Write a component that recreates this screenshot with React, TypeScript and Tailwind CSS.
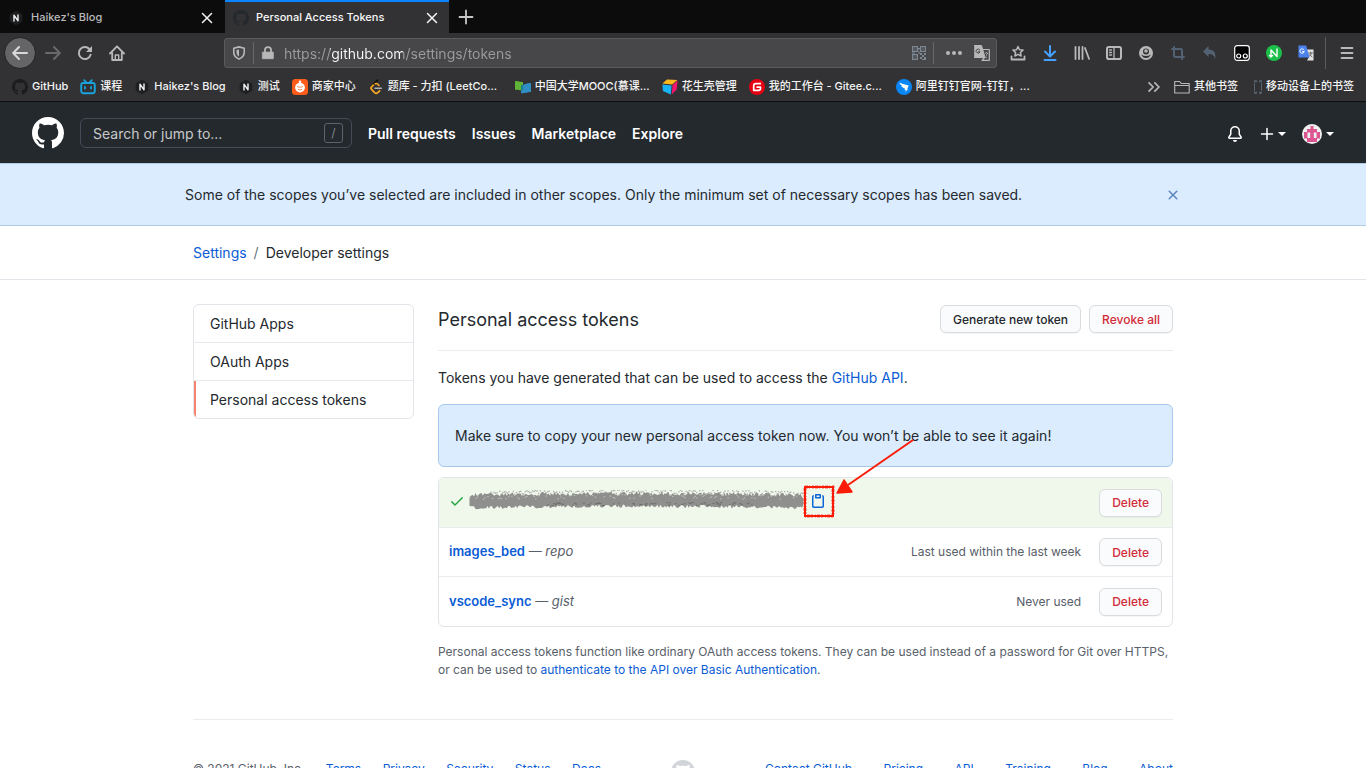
import type { ReactNode } from "react";
import { ChevronsRight, Crop } from "lucide-react";

const MARK =
  "M8 0C3.58 0 0 3.58 0 8c0 3.54 2.29 6.53 5.47 7.59.4.07.55-.17.55-.38 0-.19-.01-.82-.01-1.49-2.01.37-2.53-.49-2.69-.94-.09-.23-.48-.94-.82-1.13-.28-.15-.68-.52-.01-.53.63-.01 1.08.58 1.23.82.72 1.21 1.87.87 2.33.66.07-.52.28-.87.51-1.07-1.78-.2-3.64-.89-3.64-3.95 0-.87.31-1.59.82-2.15-.08-.2-.36-1.02.08-2.12 0 0 .67-.21 2.2.82.64-.18 1.32-.27 2-.27.68 0 1.36.09 2 .27 1.53-1.04 2.2-.82 2.2-.82.44 1.1.16 1.92.08 2.12.51.56.82 1.27.82 2.15 0 3.07-1.87 3.75-3.65 3.95.29.25.54.73.54 1.48 0 1.07-.01 1.93-.01 2.2 0 .21.15.46.55.38A8.013 8.013 0 0016 8c0-4.42-3.58-8-8-8z";
const BELL =
  "M8 16a2 2 0 001.985-1.75c.017-.137-.097-.25-.235-.25h-3.5c-.138 0-.252.113-.235.25A2 2 0 008 16zM3 5a5 5 0 0110 0v2.947c0 .05.015.098.042.139l1.703 2.555A1.518 1.518 0 0113.482 13H2.518a1.518 1.518 0 01-1.263-2.36l1.703-2.554A.25.25 0 003 7.947V5zm5-3.5A3.5 3.5 0 004.5 5v2.947c0 .346-.102.683-.294.97l-1.703 2.556a.018.018 0 00-.003.01l.001.006c0 .002.002.004.004.006a.017.017 0 00.006.004l.007.001h10.964l.007-.001a.016.016 0 00.006-.004.016.016 0 00.004-.006l.001-.007a.017.017 0 00-.003-.01l-1.703-2.554a1.75 1.75 0 01-.294-.97V5A3.5 3.5 0 008 1.5z";
const CLIPBOARD =
  "M5.75 1a.75.75 0 00-.75.75v3c0 .414.336.75.75.75h4.5a.75.75 0 00.75-.75v-3a.75.75 0 00-.75-.75h-4.5zm.75 3V2.5h3V4h-3zm-2.874-.467a.75.75 0 00-.752-1.298A1.75 1.75 0 002 3.75v9.5c0 .966.784 1.75 1.75 1.75h8.5A1.75 1.75 0 0014 13.25v-9.5a1.75 1.75 0 00-.874-1.515.75.75 0 10-.752 1.298.25.25 0 01.126.217v9.5a.25.25 0 01-.25.25h-8.5a.25.25 0 01-.25-.25v-9.5a.25.25 0 01.126-.217z";
const CHECK =
  "M13.78 4.22a.75.75 0 010 1.06l-7.25 7.25a.75.75 0 01-1.06 0L2.22 9.28a.75.75 0 011.06-1.06L6 10.94l6.72-6.72a.75.75 0 011.06 0z";
const CLOSE =
  "M3.72 3.72a.75.75 0 011.06 0L8 6.94l3.22-3.22a.75.75 0 111.06 1.06L9.06 8l3.22 3.22a.75.75 0 11-1.06 1.06L8 9.06l-3.22 3.22a.75.75 0 01-1.06-1.06L6.94 8 3.72 4.78a.75.75 0 010-1.06z";

function Octicon({ d, className = "size-4" }: { d: string; className?: string }) {
  return (
    <svg viewBox="0 0 16 16" fill="currentColor" className={`shrink-0 ${className}`} aria-hidden="true">
      <path fillRule="evenodd" d={d} />
    </svg>
  );
}

function Glyph({ children, className = "size-4" }: { children: ReactNode; className?: string }) {
  return (
    <svg
      viewBox="0 0 16 16"
      fill="none"
      stroke="currentColor"
      strokeWidth="2"
      strokeLinecap="round"
      strokeLinejoin="round"
      className={`shrink-0 ${className}`}
      aria-hidden="true"
    >
      {children}
    </svg>
  );
}

function HexN() {
  return (
    <Glyph>
      <path d="M8 .8 14.3 4.4v7.2L8 15.2 1.7 11.6V4.4Z" fill="#1d1f21" stroke="none" />
      <path d="M6 11V5.2l4 5.6V5" stroke="#f4f4f5" strokeWidth="1.4" />
    </Glyph>
  );
}

function Bilibili() {
  return (
    <Glyph>
      <rect x="1.2" y="4" width="13.6" height="10.2" rx="2.2" stroke="#19a3dc" strokeWidth="1.9" />
      <path d="M4.2 1.2 6 3.2M11.8 1.2 10 3.2M5 8v1.600M11 8v1.600" stroke="#19a3dc" strokeWidth="1.8" />
    </Glyph>
  );
}

function Merchant() {
  return (
    <Glyph>
      <rect width="16" height="16" rx="3.5" fill="#ff5c1c" stroke="none" />
      <circle cx="8" cy="8.6" r="4.9" fill="#fff" stroke="none" />
      <circle cx="8" cy="2.8" r="1.3" fill="#fff" stroke="none" />
      <path d="M5.4 7.6c1.6.9 3.6.9 5.2 0M6.2 10.4c1 .9 2.6.9 3.6 0" stroke="#ff8a5c" strokeWidth="1" />
    </Glyph>
  );
}

function LeetCode() {
  return (
    <Glyph>
      <path d="M9.6 1.2 3.4 7.4" stroke="#111" strokeWidth="1.8" />
      <path d="M5.2 6.2 3.6 7.8q-1.2 1.3 0 2.6l3 3.2q1.6 1.4 3.2 0l1.8-1.8" stroke="#f5a623" strokeWidth="1.8" />
      <path d="M7.2 4.8q1.2-.6 2.4.3l1.4 1.4" stroke="#f5a623" strokeWidth="1.6" />
      <path d="M7 9.2h6.4" stroke="#b3b3b3" strokeWidth="1.5" />
    </Glyph>
  );
}

function Mooc() {
  return (
    <Glyph>
      <path d="M0 2.2c3-.9 5 1.4 8 .6v8.4c-3 .8-5-.9-8-.2Z" fill="#5fb336" stroke="none" />
      <path d="M6 6.2c3 .6 6-2.8 10-2v9c-3-.6-6 1.8-10 1Z" fill="#2f8fc4" stroke="none" />
      <path d="M6 6.2 8 6v5.4l-2 .3Z" fill="#1f7f87" stroke="none" />
    </Glyph>
  );
}

function Cube() {
  return (
    <Glyph>
      <path d="M.4 4.6 5 .4l10.4.5-5.2 4.5Z" fill="#ffb81c" stroke="none" />
      <path d="m.4 5.4 9.2 1L8.800 15.600.9 12Z" fill="#19b2f5" stroke="none" />
      <path d="m10.6 6.2 5-4.600-.9 8.800-5 5Z" fill="#f5156c" stroke="none" />
    </Glyph>
  );
}

function Gitee() {
  return (
    <Glyph>
      <circle cx="8" cy="8" r="8" fill="#e60012" stroke="none" />
      <path d="M12 4.6H6.8Q4.7 4.6 4.7 6.7v4.6h5.2q1.6 0 1.6-1.6V8.2H7.4" stroke="#fff" strokeWidth="1.7" strokeLinecap="butt" />
    </Glyph>
  );
}

function DingTalk() {
  return (
    <Glyph>
      <circle cx="8" cy="8" r="8" fill="#0a86f5" stroke="none" />
      <path d="M3.4 3.4c2.8 1.4 6 2 8.6 2.9.7.3.6.9.3 1.5L11 9.7h1.2L9.4 13l.4-2.2H8.4l.6-1.4C7 9 5.6 8 5 6.8l2 .4C5.2 6.4 3.8 5.2 3.4 3.4Z" fill="#fff" stroke="none" />
    </Glyph>
  );
}

const bookmarks: { label: string; icon: ReactNode }[] = [
  { label: "GitHub", icon: <Octicon d={MARK} className="size-4 text-[#1b1c1e]" /> },
  { label: "课程", icon: <Bilibili /> },
  { label: "Haikez's Blog", icon: <HexN /> },
  { label: "测试", icon: <HexN /> },
  { label: "商家中心", icon: <Merchant /> },
  { label: "题库 - 力扣 (LeetCo...", icon: <LeetCode /> },
  { label: "中国大学MOOC(慕课...", icon: <Mooc /> },
  { label: "花生壳管理", icon: <Cube /> },
  { label: "我的工作台 - Gitee.c...", icon: <Gitee /> },
  { label: "阿里钉钉官网-钉钉，...", icon: <DingTalk /> },
];

function TabBar() {
  return (
    <div className="flex h-[33px] bg-[#0c0c0d] text-[11px] font-medium" role="tablist">
      <div className="flex w-[225px] items-center gap-[7px] pt-0.5 pr-3 pl-2 text-[#b9b9ba]" role="tab" aria-selected="false">
        <HexN />
        <span className="flex-1">Haikez's Blog</span>
        <button aria-label="Close tab" className="text-[#f4f4f5]">
          <Glyph className="size-3">
            <path d="m2 2 12 12M14 2 2 14" />
          </Glyph>
        </button>
      </div>
      <div
        className="flex w-[224px] items-center gap-[7px] border-t-2 border-[#0a84ff] bg-[#323234] pr-[11px] pl-2 text-[#f9f9fa]"
        role="tab"
        aria-selected="true"
      >
        <Octicon d={MARK} className="size-4 text-[#24292e]" />
        <span className="flex-1">Personal Access Tokens</span>
        <button aria-label="Close tab" className="text-[#f4f4f5]">
          <Glyph className="size-3">
            <path d="m2 2 12 12M14 2 2 14" />
          </Glyph>
        </button>
      </div>
      <button aria-label="New tab" className="flex w-[34px] items-center justify-center text-[#c8c8c9]">
        <Glyph>
          <path d="M8 1.5v13M1.5 8h13" strokeWidth="1.8" />
        </Glyph>
      </button>
    </div>
  );
}

function ToolButton({ label, children }: { label: string; children: ReactNode }) {
  return (
    <button aria-label={label} className="flex size-8 shrink-0 items-center justify-center">
      {children}
    </button>
  );
}

function Toolbar() {
  return (
    <div className="flex h-10 items-center bg-[#323234] pr-[3px] pl-1 text-[#b8b8b9]">
      <button aria-label="Back" className="flex size-8 shrink-0 items-center justify-center rounded-full border border-[#232325] bg-[#656567] text-[#d8d8d9]">
        <Glyph>
          <path d="M15 8H1.5M7 2 1.2 8 7 14" />
        </Glyph>
      </button>
      <span className="ml-px flex">
        <ToolButton label="Forward">
          <Glyph className="size-4 text-[#69696b]">
            <path d="M1 8h13.5M9 2l5.8 6L9 14" />
          </Glyph>
        </ToolButton>
        <ToolButton label="Reload">
          <Glyph className="size-4">
            <path d="M13.6 9.8A6 6 0 1 1 12.3 4" />
            <path d="M15 1v6H9Z" fill="currentColor" stroke="none" />
          </Glyph>
        </ToolButton>
        <ToolButton label="Home">
          <Glyph className="size-4">
            <path d="M1 8.5 8 1.3l7 7.2M3.2 8v7h9.6V8" strokeWidth="1.8" />
            <path d="M6.3 15v-5h3.4v5" strokeWidth="1.4" />
          </Glyph>
        </ToolButton>
      </span>
      <div className="ml-[91px] flex h-[30px] flex-1 items-center rounded-[3px] border border-[#5b5b5d] bg-[#474749]">
        <span className="flex w-7 items-center justify-center">
          <Glyph className="size-[14px]">
            <path d="M8 1 14 2.6v4.6c0 3.6-2.5 6.2-6 7.8-3.5-1.6-6-4.2-6-7.8V2.6Z" strokeWidth="1.8" />
            <path d="M8 4v8c-1.8-1-2.8-2.6-2.8-4.6V4.7Z" fill="currentColor" stroke="none" />
          </Glyph>
        </span>
        <span className="h-[22px] w-px bg-[#68686a]" />
        <span className="flex w-7 items-center justify-center">
          <Glyph className="size-[14px]">
            <path d="M2 7h12v7.500H2Z" fill="currentColor" strokeWidth="1" />
            <path d="M4.500 7V4.800a3.500 3.500 0 0 1 7 0V7" />
          </Glyph>
        </span>
        <input
          aria-label="Address"
          defaultValue="https://github.com/settings/tokens"
          className="min-w-0 flex-1 bg-[linear-gradient(90deg,#9b9b9d_48px,#f9f9fa_48px,#f9f9fa_121px,#9b9b9d_121px)] bg-clip-text pt-0.5 pl-[2px] text-sm text-transparent caret-white outline-none"
        />
        <span className="flex w-7 items-center justify-center text-[#7c8794]">
          <svg viewBox="0 0 14 14" className="size-[14px]" fill="currentColor" aria-hidden="true">
            <path
              fillRule="evenodd"
              d="M0 0h6v6H0ZM1.300 1.300v3.400h3.400V1.300ZM8 0h6v6H8ZM9.300 1.300v3.400h3.400V1.300ZM0 8h6v6H0ZM1.300 9.300v3.400h3.400V9.300ZM2.500 2.500h1v1h-1ZM10.500 2.500h1v1h-1ZM2.500 10.500h1v1h-1ZM6 2h2v1.500H6ZM6.500 5h1v3h-1ZM8 7h2v2H8ZM10 9h2v2h-2ZM12 7h2v2h-2ZM8 11h2v2H8ZM12 11h2v3h-2ZM10 13h2v1h-2ZM0 6.500h3v1H0Z"
            />
          </svg>
        </span>
        <span className="h-[22px] w-px bg-[#68686a]" />
        <button aria-label="Page actions" className="flex w-10 items-center justify-center">
          <Glyph>
            <g fill="currentColor" stroke="none">
              <circle cx="2" cy="8" r="2" />
              <circle cx="8" cy="8" r="2" />
              <circle cx="14" cy="8" r="2" />
            </g>
          </Glyph>
        </button>
        <button aria-label="Translate page" className="mr-1.5 flex w-4 items-center justify-center">
          <Glyph>
            <path d="M.5.5h7L11 12.5H.5Z" fill="#b8b8b9" stroke="#b8b8b9" strokeWidth="1" />
            <path d="M9 4.5h6.3v10.8H8L11 12" strokeWidth="1.2" />
            <path d="M5.8 5A2 2 0 1 0 6 6.8H4.4" stroke="#474749" strokeWidth="1" />
            <path d="M11.5 8q1.2-1.2 2 0 0 1-1 1.6v.5M12.5 12.3v.1" strokeWidth="1" />
          </Glyph>
        </button>
      </div>
      <div className="ml-[5px] flex">
        <ToolButton label="Save bookmark">
          <Glyph>
            <path d="m8 1.500 1.500 3.200 3.500.4-2.600 2.400.7 3.500L8 9.300 4.900 11l.7-3.500L3 5.100l3.500-.4Z" strokeWidth="1.500" />
            <path d="M1.500 11.500v3h13v-3" strokeWidth="1.800" />
          </Glyph>
        </ToolButton>
        <ToolButton label="Downloads">
          <Glyph className="size-4 text-[#45a1ff]">
            <path d="M8 1v10M3 6.500l5 5 5-5M2.500 15h11" />
          </Glyph>
        </ToolButton>
        <ToolButton label="Library">
          <Glyph>
            <path d="M1.500 2v12M5 2v12M8.500 2v12M11 3l4 10.800" strokeWidth="1.800" />
          </Glyph>
        </ToolButton>
        <ToolButton label="Sidebars">
          <Glyph>
            <rect x="1" y="2" width="14" height="12" rx="1.800" />
            <path d="M8 2v12M3.500 5h2M3.500 7.500h2M3.500 10h2" strokeWidth="1.300" />
          </Glyph>
        </ToolButton>
        <ToolButton label="Account">
          <svg viewBox="0 0 16 16" className="size-4" aria-hidden="true">
            <circle cx="8" cy="8" r="7" fill="#b8b8b9" />
            <circle cx="8" cy="6.500" r="3" fill="#323234" />
            <circle cx="8" cy="6" r="1.800" fill="#b8b8b9" />
            <path d="M3.200 9.500q4.800 3 9.600 0-1.500 3.500-4.800 3.500t-4.800-3.500Z" fill="#323234" />
          </svg>
        </ToolButton>
        <ToolButton label="Crop">
          <Crop className="size-4 text-[#536272]" strokeWidth={3} strokeLinecap="butt" />
        </ToolButton>
        <ToolButton label="Undo">
          <Glyph className="size-4 text-[#536272]">
            <path d="M6.500 1v3.500C12 4.500 14.500 8 13 14.500 12.500 10.500 10.500 9 6.500 9v3L1 6.500Z" fill="currentColor" stroke="none" />
          </Glyph>
        </ToolButton>
        <ToolButton label="Tampermonkey">
          <Glyph>
            <rect x=".7" y=".7" width="14.600" height="14.600" rx="2.500" fill="#000" stroke="#fff" strokeWidth="1.200" />
            <circle cx="4.700" cy="11" r="2" stroke="#fff" strokeWidth="1.200" />
            <circle cx="11.300" cy="11" r="2" stroke="#fff" strokeWidth="1.200" />
          </Glyph>
        </ToolButton>
        <ToolButton label="Extension">
          <Glyph>
            <circle cx="8" cy="8" r="8" fill="#1dbf4b" stroke="none" />
            <path d="M5 12V5l6 6.500V4M3.500 10.500 5 12l1.500-1.500" stroke="#fff" strokeWidth="1.400" />
          </Glyph>
        </ToolButton>
        <ToolButton label="Google Translate">
          <Glyph>
            <path d="M8 4.500h7.500v11H9L11 12Z" fill="#e4e4e4" stroke="none" />
            <path d="M10.500 8h4M12.500 7v1M13.800 8q-.8 2.500-3 3.500M11.500 9l2.500 3" stroke="#666" strokeWidth=".9" />
            <path d="M.5.5h7.7L11.5 12.5H.5Z" fill="#4b82ee" stroke="none" />
            <path d="M6 4.800A2.200 2.200 0 1 0 6.300 6.600H4.500" stroke="#fff" strokeWidth="1" />
          </Glyph>
        </ToolButton>
      </div>
      <span className="ml-[3px] h-8 w-px bg-[#5b5b5d]" />
      <button aria-label="Open menu" className="ml-[5px] flex size-8 items-center justify-center">
        <Glyph>
          <path d="M2.500 3h11M2.500 8h11M2.500 13h11" strokeWidth="1.800" />
        </Glyph>
      </button>
    </div>
  );
}

function BookmarksBar() {
  return (
    <div className="flex h-[29px] items-center border-b border-[#0c0c0d] bg-[#323234] px-3 text-[11px] font-medium whitespace-nowrap text-[#f4f4f5]">
      <div className="flex flex-1 gap-3">
        {bookmarks.map((b, i) => (
          <a key={i} href="#" className={`flex items-center gap-1 ${b.label.endsWith("...") ? "w-[135px]" : ""}`}>
            {b.icon}
            {b.label}
          </a>
        ))}
      </div>
      <button aria-label="More bookmarks" className="mr-2.5 text-[#b8b8b9]">
        <ChevronsRight className="size-5" />
      </button>
      <a href="#" className="mr-4 flex items-center gap-1">
        <Glyph className="size-4 text-[#b8b8b9]">
          <path d="M.7 13.500v-11h5l1.500 2h8v9.500H.7ZM.7 6.500h14.500" strokeWidth="1.100" />
        </Glyph>
        其他书签
      </a>
      <a href="#" className="flex items-center gap-1">
        <svg viewBox="0 0 8 14" className="h-[14px] w-2" fill="none" stroke="#56636f" aria-hidden="true">
          <path d="M.5 3v8M7.5 3v8" />
          <path d="M0 1.200h8M0 12.800h8" strokeWidth="2" strokeDasharray="3 2" />
        </svg>
        移动设备上的书签
      </a>
    </div>
  );
}

function Caret() {
  return (
    <svg viewBox="0 0 8 4" className="h-1 w-2" fill="currentColor" aria-hidden="true">
      <path d="M0 0h8L4 4Z" />
    </svg>
  );
}

function Avatar() {
  return (
    <svg viewBox="0 0 20 20" className="size-5 rounded-full" aria-hidden="true">
      <rect width="20" height="20" fill="#f0f0f0" />
      <path d="M8.500 2h3v3H15v3h3v6.500h-3V17H5v-2.500H2V8h3V5h3.500Z" fill="#dc5590" />
      <path d="M5.500 8.500h2.700V14H5.500ZM11.800 8.500h2.700V14h-2.700Z" fill="#f0f0f0" />
      <path d="M5 15.500h10V18H5Z" fill="#dc5590" />
    </svg>
  );
}

function SiteHeader() {
  return (
    <header className="flex h-[61px] shrink-0 items-center gap-4 bg-[#24292e] px-8 text-sm text-white">
      <a href="#" aria-label="Homepage">
        <Octicon d={MARK} className="size-8" />
      </a>
      <label className="flex h-[30px] w-[272px] items-center rounded-md border border-[#444d56] pr-2 pl-3">
        <input
          aria-label="Search or jump to"
          placeholder="Search or jump to..."
          className="min-w-0 flex-1 pt-0.5 outline-none placeholder:text-[#c8c9ca]"
        />
        <span className="flex h-5 w-[19px] items-center justify-center rounded-[3px] border border-[#5b636b] text-xs text-[#80868c]">
          /
        </span>
      </label>
      <nav className="flex flex-1 gap-4 pt-0.5 font-semibold">
        <a href="#">Pull requests</a>
        <a href="#">Issues</a>
        <a href="#">Marketplace</a>
        <a href="#">Explore</a>
      </nav>
      <button aria-label="Notifications" className="pt-0.5">
        <Octicon d={BELL} />
      </button>
      <button aria-label="Create new" className="flex items-center gap-[3px] pt-0.5">
        <Glyph>
          <path d="M8 2.500v11M2.500 8h11" strokeWidth="1.500" />
        </Glyph>
        <Caret />
      </button>
      <button aria-label="Account menu" className="flex items-center gap-1 pt-0.5">
        <Avatar />
        <Caret />
      </button>
    </header>
  );
}

function Btn({ children, danger = false }: { children: ReactNode; danger?: boolean }) {
  return (
    <button
      className={`h-7 rounded-md border border-[#d9dbde] bg-[#fafbfc] px-3 pt-px text-xs font-medium shadow-[0_1px_0_rgba(27,31,35,0.04)] ${
        danger ? "text-[#d22c3a]" : "text-[#24292e]"
      }`}
    >
      {children}
    </button>
  );
}

/* Deterministic noise, so that the rough edges are the same on every render. */
function noise(n: number) {
  const v = Math.sin(n * 127.1 + 11.7) * 43758.5453;
  return v - Math.floor(v);
}

function Scribble() {
  const steps = 224;
  const top: string[] = [];
  const bottom: string[] = [];
  const specks: ReactNode[] = [];
  for (let i = 0; i <= steps; i++) {
    const x = (i / steps) * 334 + 0.5;
    const bend = Math.sin((i / steps) * Math.PI);
    const end = Math.min(1, 0.6 + i / 5, 0.6 + (steps - i) / 5);
    const mid = 11.5 - bend * 1.5;
    top.push(`${x.toFixed(1)},${(mid - (4.5 + noise(i) * 4) * end).toFixed(1)}`);
    bottom.unshift(`${x.toFixed(1)},${(mid + (4.5 + noise(i + 500) * 3.5) * end).toFixed(1)}`);
    if (i > 12) {
      const y = mid - 6 - noise(i + 900) * 5;
      specks.push(<rect key={i} x={x} y={y} width="1.2" height="1.4" fill="#8f908e" opacity=".75" />);
    }
    if (i > 50 && i < 190 && noise(i + 33) > 0.6) {
      specks.push(
        <rect key={`d${i}`} x={x} y={12 + noise(i + 40) * 3} width={1 + noise(i) * 2} height="1" fill="#686b66" />,
      );
    }
    if (noise(i + 210) > 0.65) {
      specks.push(
        <rect key={`l${i}`} x={x} y={mid - 6 + noise(i + 70) * 4} width="1.3" height="1" fill="#c4c9be" />,
      );
    }
  }
  return (
    <svg viewBox="0 0 336 22" className="h-[22px] w-[336px]" role="img" aria-label="Hidden token">
      <polygon points={[...top, ...bottom].join(" ")} fill="#8f908e" />
      {specks}
    </svg>
  );
}

function Annotation() {
  return (
    <svg
      viewBox="0 0 112 82"
      className="pointer-events-none absolute -top-[56px] -left-2 h-[82px] w-28"
      fill="none"
      stroke="#fa1c08"
      aria-hidden="true"
    >
      <rect x="3" y="50" width="28" height="29" strokeWidth="2" />
      <rect x="3" y="50" width="28" height="29" strokeWidth="3" strokeDasharray="3 1 1 2 2 1" strokeOpacity=".7" />
      <path d="M111 3 46 48" strokeWidth="2" />
      <path d="m35 56 7-13 8 12Z" fill="#fa1c08" strokeWidth="1.500" strokeLinejoin="round" />
    </svg>
  );
}

function TokenRow({ name, scope, used }: { name: string; scope: string; used: string }) {
  return (
    <li className="flex h-[49px] items-center border-t border-[#eaecef] px-2.5 text-xs text-[#586069] last:h-[50px]">
      <div className="flex-1 text-[13px]">
        <a href="#" className="font-semibold text-[#0b5cd5]">
          {name}
        </a>{" "}
        — <em>{scope}</em>
      </div>
      <span className="mr-[18px]">{used}</span>
      <Btn danger>Delete</Btn>
    </li>
  );
}

export default function App() {
  return (
    <div className="flex h-screen flex-col overflow-hidden bg-white font-[Inter,'Noto_Sans_CJK_SC',sans-serif] text-sm text-[#24292e]">
      <div className="shrink-0">
        <TabBar />
        <Toolbar />
        <BookmarksBar />
      </div>
      <div className="min-h-0 flex-1 overflow-hidden">
        <SiteHeader />
        <div className="border-y border-[#b0cbe4] bg-[#dbecff] py-5">
          <div className="mx-auto flex h-[21px] max-w-[996px] items-center justify-between">
            <p>
              Some of the scopes you’ve selected are included in other scopes. Only the minimum set of necessary scopes
              has been saved.
            </p>
            <button aria-label="Dismiss" className="text-[#5a84bb]">
              <Octicon d={CLOSE} />
            </button>
          </div>
        </div>
        <div className="border-b border-[#e1e4e8]">
          <nav className="mx-auto flex h-[53px] max-w-[980px] items-center gap-[7px]" aria-label="Breadcrumb">
            <a href="#" className="text-[#0b5cd5]">
              Settings
            </a>
            <span className="text-[#6a737d]">/</span>
            <span>Developer settings</span>
          </nav>
        </div>
        <div className="mx-auto flex max-w-[980px] items-start gap-6 pt-6">
          <nav className="w-[221px] shrink-0 overflow-hidden rounded-md border border-[#e1e4e8]" aria-label="Developer settings">
            <a href="#" className="flex h-[38px] items-center border-b border-[#e8eaed] px-4">
              GitHub Apps
            </a>
            <a href="#" className="flex h-[38px] items-center border-b border-[#e8eaed] px-4">
              OAuth Apps
            </a>
            <a href="#" className="flex h-[37px] items-center border-l-2 border-[#f9826c] pr-4 pl-[14px]">
              Personal access tokens
            </a>
          </nav>
          <main className="min-w-0 flex-1">
            <div className="flex h-[47px] items-start gap-2 border-b border-[#eaecef] pt-px">
              <h1 className="flex-1 text-lg leading-[30px]">Personal access tokens</h1>
              <Btn>Generate new token</Btn>
              <Btn danger>Revoke all</Btn>
            </div>
            <p className="mt-4 mb-4 leading-[21px]">
              Tokens you have generated that can be used to access the{" "}
              <a href="#" className="text-[#0b5cd5]">
                GitHub API
              </a>
              .
            </p>
            <div className="rounded-md border border-[#a9c9ec] bg-[#dbecff] px-4 py-5">
              <p className="leading-[21px]">
                Make sure to copy your new personal access token now. You won’t be able to see it again!
              </p>
            </div>
            <ul className="mt-2.5 rounded-md border border-[#e1e4e8]">
              <li className="flex h-[49px] items-center rounded-t-md bg-[#f0f8ec] px-2.5">
                <div className="flex flex-1 items-center pb-1">
                  <Octicon d={CHECK} className="size-4 text-[#28a745]" />
                  <span className="ml-1">
                    <Scribble />
                  </span>
                  <div className="relative ml-[5px] flex">
                    <button aria-label="Copy token" className="text-[#0b66d8]">
                      <Octicon d={CLIPBOARD} />
                    </button>
                    <Annotation />
                  </div>
                </div>
                <Btn danger>Delete</Btn>
              </li>
              <TokenRow name="images_bed" scope="repo" used="Last used within the last week" />
              <TokenRow name="vscode_sync" scope="gist" used="Never used" />
            </ul>
            <p className="mt-4 text-xs leading-[18px] text-[#586069]">
              Personal access tokens function like ordinary OAuth access tokens. They can be used instead of a password
              for Git over HTTPS, or can be used to{" "}
              <a href="#" className="text-[#0b5cd5]">
                authenticate to the API over Basic Authentication
              </a>
              .
            </p>
          </main>
        </div>
        <footer className="mx-auto mt-10 flex max-w-[980px] items-start justify-between border-t border-[#eaecef] pt-10 text-xs leading-[18px] text-[#0b5cd5]">
          <div className="flex w-[408px] justify-between">
            <span className="text-[#586069]">© 2021 GitHub, Inc.</span>
            <a href="#">Terms</a>
            <a href="#">Privacy</a>
            <a href="#">Security</a>
            <a href="#">Status</a>
            <a href="#">Docs</a>
          </div>
          <Octicon d={MARK} className="size-6 text-[#d1d5da]" />
          <div className="flex w-[408px] justify-between">
            <a href="#">Contact GitHub</a>
            <a href="#">Pricing</a>
            <a href="#">API</a>
            <a href="#">Training</a>
            <a href="#">Blog</a>
            <a href="#">About</a>
          </div>
        </footer>
      </div>
    </div>
  );
}
